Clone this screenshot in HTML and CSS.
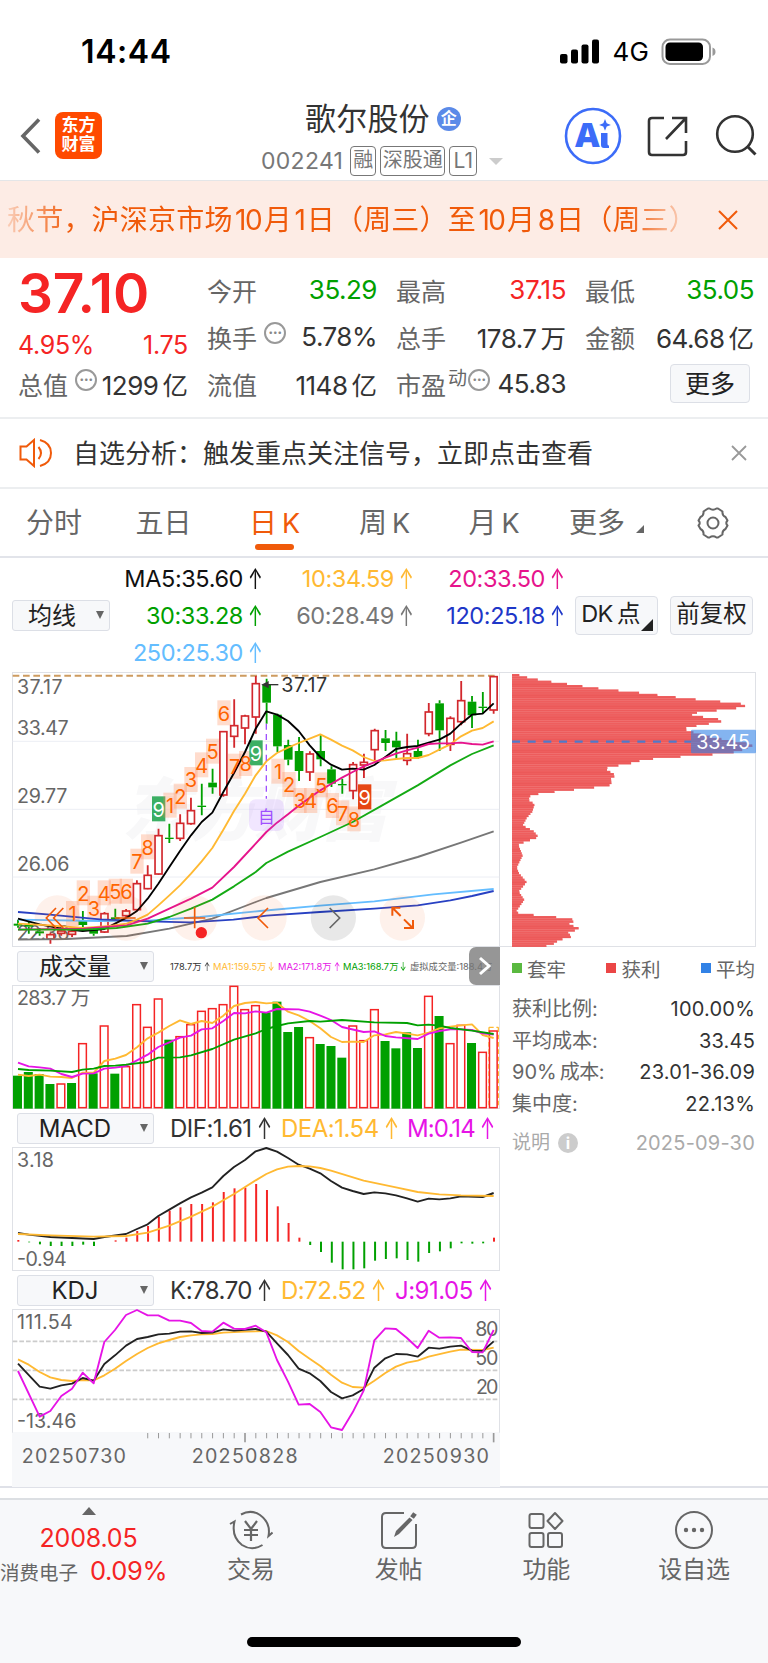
FILE: index.html
```html
<!DOCTYPE html>
<html lang="zh-CN">
<head>
    <meta charset="UTF-8">
    <meta name="viewport" content="width=device-width, initial-scale=1.0">
    <title>歌尔股份 002241</title>
    <link rel="stylesheet" href="styles.css">
</head>
<body>
    <div class="status">
        <span class="time">14:44</span>
        <svg class="signal" width="40" height="25" viewBox="0 0 40 25">
            <rect x="0" y="15" width="7.5" height="9.5" rx="2"/>
            <rect x="11" y="10.5" width="7" height="14" rx="2"/>
            <rect x="21.5" y="5.5" width="7" height="19" rx="2"/>
            <rect x="32" y="0.5" width="7" height="24" rx="2"/>
        </svg>
        <span class="net">4G</span>
        <svg class="battery" width="55" height="28" viewBox="0 0 55 28">
            <rect x="1.5" y="1.5" width="47.5" height="24.5" rx="7.5" fill="#fff" stroke="#999" stroke-width="2"/>
            <rect x="4.5" y="4.5" width="37.5" height="18.5" rx="4.5"/>
            <path d="M51.5 9.5q3 1 3 4.2t-3 4.3z" fill="#999"/>
        </svg>
    </div>

    <div class="nav">
        <svg class="back" width="22" height="38" viewBox="0 0 22 38"><path d="M19 2.5L3 19l16 16.5" fill="none" stroke="#666" stroke-width="3.6"/></svg>
        <div class="logo"><span>东方</span><span>财富</span></div>
        <div class="title">
            <div class="name">歌尔股份<i class="corp">企</i></div>
            <div class="code">002241<b class="t1">融</b><b class="t2">深股通</b><b class="t3">L1</b><i class="down"></i></div>
        </div>
        <div class="ai">
            <svg width="58" height="58" viewBox="0 0 58 58">
                <circle cx="29" cy="29" r="27" fill="none" stroke="#3c6cf8" stroke-width="2.6"/>
                <path d="M41 12l1.700 4.200 4.200 1.700-4.200 1.700L41 23.800l-1.700-4.200-4.200-1.700 4.200-1.700z" fill="#3c6cf8"/>
                <text x="11" y="40" class="aitext">A</text>
                <path d="M37 26h6.500v11q0 1.500 1.500 1.500v2.500h-5q-3 0-3-3z" fill="#3c6cf8"/>
            </svg>
        </div>
        <svg class="share" width="42" height="42" viewBox="0 0 42 42"><path d="M17 3H5Q2 3 2 6v31q0 3 3 3h31q3 0 3-3V26M25 3h14v15M39 3L19 24" fill="none" stroke="#333" stroke-width="2.600"/></svg>
        <svg class="search" width="42" height="44" viewBox="0 0 42 44"><circle cx="20" cy="21" r="17.800" fill="none" stroke="#333" stroke-width="2.600"/><path d="M32 33l8.500 8.500" stroke="#333" stroke-width="3"/></svg>
    </div>

    <div class="banner">
        <div class="marquee">秋节，沪深京市场<em>10</em>月<em>1</em>日（周三）至<em>10</em>月<em>8</em>日（周三）</div>
        <svg width="20" height="20" viewBox="0 0 20 20"><path d="M1 1l18 18M19 1L1 19" stroke="#f05a0a" stroke-width="2"/></svg>
    </div>

    <div class="quote">
        <div class="last">
            <div class="price">37.10</div>
            <div class="change"><span>4.95%</span><span>1.75</span></div>
            <div class="pair"><span class="lbl">总值<i class="dots">···</i></span><span>1299<u>亿</u></span></div>
        </div>
        <div class="grid">
            <div class="pair"><span class="lbl">今开</span><span class="down-c">35.29</span></div>
            <div class="pair"><span class="lbl">最高</span><span class="up-c">37.15</span></div>
            <div class="pair"><span class="lbl">最低</span><span class="down-c">35.05</span></div>
            <div class="pair"><span class="lbl">换手<i class="dots">···</i></span><span>5.78%</span></div>
            <div class="pair"><span class="lbl">总手</span><span>178.7<u>万</u></span></div>
            <div class="pair"><span class="lbl">金额</span><span>64.68<u>亿</u></span></div>
            <div class="pair"><span class="lbl">流值</span><span>1148<u>亿</u></span></div>
            <div class="pair"><span class="lbl">市盈<sup>动</sup><i class="dots pe">···</i></span><span>45.83</span></div>
            <div class="morecell"><button class="more">更多</button></div>
        </div>
    </div>

    <div class="notice">
        <svg width="34" height="30" viewBox="0 0 34 30" fill="none" stroke="#f05a0a" stroke-width="2"><path d="M1.500 8.500h6L15 2v26l-7.500-6.500h-6zM19.500 9q5 6 0 12M21 2q11 3 11 13T21 28"/></svg>
        <span>自选分析：触发重点关注信号，立即点击查看</span>
        <svg class="x" width="16" height="16" viewBox="0 0 16 16"><path d="M1 1l14 14M15 1L1 15" stroke="#999" stroke-width="1.800"/></svg>
    </div>

    <div class="tabs">
        <span>分时</span><span>五日</span><span class="active">日<em>K</em></span><span>周<em>K</em></span><span>月<em>K</em></span><span class="tab-more">更多<i class="corner"></i></span>
        <svg width="32" height="32" viewBox="0 0 32 32" fill="none" stroke="#666" stroke-width="2"><path d="M11 1.500h1.500q3.500 2.500 7 0H21l4.500 3q-.5 4 3 5.500l2 3.500q-2.500 2.500 0 5l-2 3.500q-3.500 1.500-3 5.500l-4.500 3h-1.500q-3.500-2.500-7 0H11l-4.500-3q.5-4-3-5.500l-2-3.500q2.500-2.500 0-5l2-3.500q3.500-1.500 3-5.500z" stroke-linejoin="round"/><circle cx="16" cy="16" r="5.500"/></svg>
    </div>

    <div class="ma">
        <div class="select ma-select">均线<i></i></div>
        <div class="ma-grid">
            <span class="c-black">MA5:35.60<a>↑</a></span><span class="c-yellow">10:34.59<a>↑</a></span><span class="c-pink">20:33.50<a>↑</a></span>
            <span class="c-green">30:33.28<a>↑</a></span><span class="c-gray">60:28.49<a>↑</a></span><span class="c-blue">120:25.18<a>↑</a></span>
            <span class="c-sky">250:25.30<a>↑</a></span>
        </div>
        <div class="ma-btn dk">DK<u>点</u><i class="corner"></i></div>
        <div class="ma-btn">前复权</div>
    </div>

    <div class="charts">
        <div class="left">
            <svg id="kline" width="489" height="275" viewBox="36 35 1467 825"></svg>
            <div class="head vol">
                <div class="select">成交量<i></i></div>
                <span class="v1">178.7万<a>↑</a></span><span class="v2 c-yellow">MA1:159.5万<a>↓</a></span><span class="v3 c-purple">MA2:171.8万<a>↑</a></span><span class="v4 c-green">MA3:168.7万<a>↓</a></span><span class="v5">虚拟成交量:188.4万</span>
                <div class="next"><svg width="14" height="20" viewBox="0 0 14 20"><path d="M2 2l9 8-9 8" fill="none" stroke="#fff" stroke-width="3"/></svg></div>
            </div>
            <svg id="volume" width="489" height="124" viewBox="36 135 1467 372"></svg>
            <div class="head">
                <div class="select">MACD<i></i></div>
                <span class="h1">DIF:1.61<a>↑</a></span><span class="h2 c-yellow">DEA:1.54<a>↑</a></span><span class="h3 c-purple">M:0.14<a>↑</a></span>
            </div>
            <svg id="macd" width="489" height="124" viewBox="36 21 1467 372"></svg>
            <div class="head">
                <div class="select">KDJ<i></i></div>
                <span class="k1">K:78.70<a>↑</a></span><span class="k2 c-yellow">D:72.52<a>↑</a></span><span class="k3 c-purple">J:91.05<a>↑</a></span>
            </div>
            <svg id="kdj" width="489" height="178" viewBox="36 27 1467 534"></svg>
        </div>
        <div class="right">
            <svg id="chips" width="256" height="275" viewBox="0 305 768 825"></svg>
            <div class="legend"><span class="l-g">套牢</span><span class="l-r">获利</span><span class="l-b">平均</span></div>
            <div class="row"><span>获利比例:</span><b>100.00%</b></div>
            <div class="row"><span>平均成本:</span><b>33.45</b></div>
            <div class="row"><span>90%<u>成本:</u></span><b>23.01-36.09</b></div>
            <div class="row"><span>集中度:</span><b>22.13%</b></div>
            <div class="row note"><span>说明<i>i</i></span><b>2025-09-30</b></div>
        </div>
    </div>

    <div class="tabbar">
        <div class="index">
            <i class="up"></i>
            <div class="value">2008.05</div>
            <div class="sector">消费电子<span>0.09%</span></div>
        </div>
        <div class="item">
            <svg width="44" height="40" viewBox="0 0 44 40" fill="none" stroke="#666" stroke-width="2"><path d="M12 4.500Q22-1 31 5q11 8 8.500 21l4-3.500M33.500 35Q23 41.500 13 35 2 26.500 5.500 11.500L1 14"/><path d="M16 11l6 8 6-8M22 19v12M15 20h14M15 25h14" stroke-width="2.200"/></svg>
            交易
        </div>
        <div class="item">
            <svg width="44" height="40" viewBox="0 0 44 40" fill="none" stroke="#666" stroke-width="2"><path d="M27 3H9Q5 3 5 7v27q0 4 4 4h26q4 0 4-4V14"/><path d="M17 27l2-6L32.500 7.500l3 2.500L22 24z" fill="#666" stroke="none"/><path d="M35 7.500l3-4" stroke-width="4.500"/></svg>
            发帖
        </div>
        <div class="item">
            <svg width="44" height="40" viewBox="0 0 44 40" fill="none" stroke="#666" stroke-width="2"><rect x="5.500" y="4" width="14" height="14" rx="2"/><rect x="5.500" y="23" width="14" height="14" rx="2"/><rect x="24" y="23" width="14" height="14" rx="2"/><path d="M31 3l7.500 8-7.500 8-7.500-8z" stroke-linejoin="round"/></svg>
            功能
        </div>
        <div class="item">
            <svg width="44" height="40" viewBox="0 0 44 40" fill="none" stroke="#666" stroke-width="2"><circle cx="22" cy="20" r="18"/><g fill="#666" stroke="none"><circle cx="14" cy="20" r="2.200"/><circle cx="22" cy="20" r="2.200"/><circle cx="30" cy="20" r="2.200"/></g></svg>
            设自选
        </div>
        <div class="home"></div>
    </div>
    <script src="script.js"></script>
</body>
</html>
```
FILE: styles.css
```css
* {
    box-sizing: border-box;
}
body {
    margin: 0;
    width: 768px;
    height: 1663px;
    overflow: hidden;
    background: #fff;
    color: #333;
    font-family: Inter, "Noto Sans CJK SC", sans-serif;
    font-size: 26px;
}
i, em {
    font-style: normal;
}
u, a {
    text-decoration: none;
}
svg {
    display: block;
    flex: none;
}
span, div, button {
    white-space: nowrap;
}

/* status bar */
.status {
    display: flex;
    align-items: center;
    height: 103px;
    padding: 0 52px 0 81px;
    color: #000;
}
.time {
    flex: 1;
    font-size: 32px;
    font-weight: 600;
    letter-spacing: 0.6px;
}
.net {
    margin: 0 12px 0 12px;
    font-size: 26px;
    letter-spacing: 0.2px;
}

/* title bar */
.nav {
    display: flex;
    height: 78px;
    border-bottom: 1px solid #e4e6e8;
    padding-left: 20px;
}
.back {
    margin-top: 14px;
}
.logo {
    display: flex;
    flex-direction: column;
    width: 47px;
    height: 47px;
    margin: 9px 0 0 13px;
    padding-top: 4px;
    border-radius: 8px;
    background: #ff4a00;
    color: #fff;
    font-size: 17px;
    font-weight: 700;
    line-height: 19px;
    text-align: center;
}
.title {
    width: 340px;
    margin-left: 110px;
}
.name {
    display: flex;
    align-items: center;
    height: 32px;
    padding-left: 93px;
    font-size: 31px;
    line-height: 32px;
    letter-spacing: 0.2px;
}
.corp {
    width: 24px;
    height: 24px;
    margin-left: 7px;
    border-radius: 12px;
    background: #5b8ae8;
    color: #fff;
    font-size: 16px;
    font-weight: 700;
    line-height: 23px;
    text-align: center;
}
.code {
    display: flex;
    align-items: center;
    height: 30px;
    margin-top: 11px;
    padding-left: 49px;
    color: #777;
    font-size: 23px;
    letter-spacing: 0.3px;
}
.code b {
    height: 30px;
    margin-left: 4px;
    border: 1.5px solid #777;
    border-radius: 4px;
    font-size: 20px;
    font-weight: 400;
    line-height: 27px;
    text-align: center;
    letter-spacing: 0;
}
.code .t1 {
    width: 26px;
    margin-left: 7px;
}
.code .t2 {
    width: 65px;
}
.code .t3 {
    width: 28px;
    font-size: 21px;
}
.down {
    margin-left: 12px;
    border: 7px solid transparent;
    border-top-color: #ccc;
    border-bottom: 0;
}
.ai {
    margin: 4px 0 0 12px;
}
.aitext {
    font: 900 34px "Noto Sans", Inter, sans-serif;
    fill: #3c6cf8;
}
.share {
    margin: 12px 0 0 25px;
}
.search {
    margin: 10px 0 0 26px;
}

/* holiday notice */
.banner {
    display: flex;
    align-items: center;
    justify-content: space-between;
    height: 77px;
    padding: 0 30px 0 7px;
    background: #fdece5;
    color: #f05a0a;
}
.marquee {
    width: 695px;
    padding-bottom: 3px;
    font-size: 28px;
    letter-spacing: 0.2px;
    -webkit-mask-image: linear-gradient(90deg, rgba(0, 0, 0, 0.2), #000 65px, #000 620px, rgba(0, 0, 0, 0.2) 675px);
    mask-image: linear-gradient(90deg, rgba(0, 0, 0, 0.2), #000 65px, #000 620px, rgba(0, 0, 0, 0.2) 675px);
}
.marquee em {
    margin: 0 2.5px;
    letter-spacing: -1.5px;
}

/* quote */
.quote {
    display: flex;
    height: 161px;
    padding: 10px 13px 0 18px;
    border-bottom: 2px solid #eceef0;
}
.last {
    width: 170px;
    margin-right: 19px;
    color: #f52424;
}
.price {
    height: 50px;
    font-size: 55px;
    font-weight: 600;
    line-height: 51px;
    letter-spacing: -0.2px;
}
.change {
    display: flex;
    justify-content: space-between;
    height: 44px;
    line-height: 54px;
    font-size: 25px;
    letter-spacing: -0.3px;
}
.pair {
    display: flex;
    justify-content: space-between;
    align-items: center;
    height: 46px;
    padding-bottom: 3px;
    color: #333;
    letter-spacing: -0.5px;
}
.pair u {
    margin-left: 4px;
    font-size: 25.5px;
    letter-spacing: 0;
}
.lbl {
    display: flex;
    color: #666;
    font-size: 25px;
    letter-spacing: 0;
}
.dots {
    width: 22px;
    height: 22px;
    margin: 3px 0 0 7px;
    border: 2px solid #999;
    border-radius: 11px;
    color: #888;
    font-size: 15px;
    font-weight: 700;
    line-height: 18px;
    text-align: center;
    letter-spacing: -0.5px;
}
.lbl sup {
    margin: -1px 0 0 2px;
    font-size: 19px;
    line-height: 28px;
}
.dots.pe {
    margin-left: 1px;
}
.grid {
    flex: 1;
    display: grid;
    grid-template-columns: 170px 170px 169px;
    grid-auto-rows: 47px;
    column-gap: 19px;
}
.down-c {
    color: #00a000;
}
.up-c {
    color: #f52424;
}
.morecell {
    padding: 2px 0 0 85px;
}
.more {
    width: 80px;
    height: 39px;
    padding: 0;
    border: 1px solid #dcdfe6;
    border-radius: 4px;
    background: #f7f8fa;
    color: #222;
    font: 25px/34px Inter, "Noto Sans CJK SC", sans-serif;
}

/* signal line */
.notice {
    display: flex;
    align-items: center;
    height: 70px;
    padding: 0 21px 0 19px;
    border-bottom: 2px solid #eceef0;
    font-size: 26px;
}
.notice span {
    flex: 1;
    margin-left: 20px;
    padding-bottom: 4px;
}

/* period tabs */
.tabs {
    display: grid;
    grid-template-columns: 108px 111px 111px 109px 110px 129px 32px;
    align-items: center;
    height: 69px;
    border-bottom: 2px solid #e2e4ea;
    color: #666;
    font-size: 28px;
}
.tabs span {
    position: relative;
    padding-bottom: 4px;
    text-align: center;
}
.tabs em {
    margin-left: 5px;
    font-size: 27px;
}
.tabs svg {
    margin-left: 19px;
}
.tabs .active {
    color: #f05a0a;
}
.active::after {
    content: "";
    position: absolute;
    left: 36px;
    bottom: -5px;
    width: 39px;
    height: 6px;
    border-radius: 3px;
    background: #f05a0a;
}
.tabs .tab-more {
    padding-left: 20px;
    text-align: left;
}
.tabs .corner {
    display: inline-block;
    margin-left: 11px;
    border-left: 8px solid transparent;
    border-bottom: 8px solid #666;
}

/* moving averages */
.ma {
    display: flex;
    align-items: center;
    height: 114px;
    padding-left: 12px;
}
.select {
    display: flex;
    align-items: center;
    justify-content: center;
    position: relative;
    width: 137px;
    height: 31px;
    padding-right: 21px;
    border: 1px solid #dcdfe6;
    border-radius: 3px;
    background: #f7f8fa;
    color: #222;
    font-size: 24px;
    line-height: 29px;
}
.select i {
    position: absolute;
    right: 5px;
    top: 10px;
    border: 4.5px solid transparent;
    border-top: 8px solid #666;
    border-bottom: 0;
}
.ma-select {
    width: 98px;
    padding-right: 18px;
}
.ma-grid {
    display: grid;
    grid-template-columns: 150px 151px 151px;
    grid-auto-rows: 37px;
    height: 111px;
    line-height: 37px;
    font-size: 23.5px;
    text-align: right;
}
.ma-grid a, .head a {
    display: inline-block;
    width: 12px;
    margin-left: 5px;
    text-align: left;
    transform: scale(0.75, 1.22);
    transform-origin: 0 50%;
}
.ma-grid span {
    letter-spacing: -0.4px;
}
.ma-btn {
    position: relative;
    width: 83px;
    height: 39px;
    margin-left: 12px;
    border: 1px solid #dcdfe6;
    border-radius: 4px;
    background: #f7f8fa;
    color: #222;
    font-size: 23.5px;
    line-height: 34px;
    text-align: center;
}
.dk {
    margin-left: 13px;
    padding-right: 12px;
    letter-spacing: -0.5px;
}
.dk u {
    margin-left: 4px;
}
.dk .corner {
    position: absolute;
    right: 4px;
    bottom: 3px;
    border-left: 12px solid transparent;
    border-bottom: 12px solid #222;
}
.c-black { color: #111; }
.c-yellow { color: #ffb932; }
.c-pink { color: #e6148c; }
.c-green { color: #00a000; }
.c-gray { color: #777; }
.c-blue { color: #1e37c8; }
.c-sky { color: #64bdff; }
.c-purple { color: #e614e6; }

/* charts */
.charts {
    display: flex;
    height: 816px;
    border-bottom: 2px solid #dfe1e8;
}
.left {
    width: 488px;
    margin-left: 12px;
}
.head {
    display: flex;
    align-items: center;
    position: relative;
    width: 489px;
    height: 38px;
    padding-left: 5px;
    font-size: 24px;
    letter-spacing: -0.5px;
}
.head .select {
    margin-right: 16px;
    flex: none;
    letter-spacing: 0;
}
.h1, .k1 { width: 111px; }
.h2 { width: 126px; }
.k2 { width: 114px; }
.head .h3 { letter-spacing: -0.9px; }
.vol {
    font-size: 9.3px;
    letter-spacing: 0;
}
.vol a {
    width: 7px;
    margin-left: 2px;
    font-size: 10px;
}
.v1 { width: 43px; }
.v2, .v3 { width: 65px; }
.v4 { width: 67px; }
.v5 { color: #666; }
.next {
    display: flex;
    align-items: center;
    justify-content: center;
    position: absolute;
    right: 1px;
    top: 0;
    width: 31px;
    height: 38px;
    border-radius: 7px 0 0 7px;
    background: rgba(120, 120, 120, 0.78);
}
.axis {
    fill: #666;
}
.chart-line {
    fill: none;
    stroke-width: 5.6;
    stroke-linejoin: round;
}
.watermark {
    font: italic 900 205px "Noto Sans CJK SC", sans-serif;
    fill: #f8f8f9;
}

/* chip distribution */
.right {
    width: 256px;
    font-size: 20px;
}
.legend {
    display: flex;
    justify-content: space-between;
    height: 42px;
    margin: 0 1px 2px 12px;
    align-items: center;
    color: #666;
    font-size: 19.5px;
}
.legend span {
    display: flex;
    align-items: center;
    gap: 5px;
}
.legend span::before {
    content: "";
    width: 10px;
    height: 10px;
    background: #5ab940;
}
.legend .l-r::before { background: #eb4646; }
.legend .l-b::before { background: #3282e6; }
.row {
    display: flex;
    justify-content: space-between;
    height: 31.5px;
    margin: 0 1px 0 12px;
    line-height: 36px;
    color: #666;
}
.row b {
    color: #333;
    font-weight: 400;
    letter-spacing: 0.2px;
}
.row u {
    margin-left: 3px;
    letter-spacing: -0.5px;
}
.row.note {
    margin-top: 8px;
}
.note, .note b {
    color: #aaa;
}
.note span {
    display: flex;
    align-items: center;
    height: 36px;
    font-size: 19px;
}
.note i {
    width: 20px;
    height: 20px;
    margin-left: 8px;
    border-radius: 10px;
    background: #ccc;
    color: #fff;
    font-size: 16px;
    font-weight: 700;
    line-height: 20px;
    text-align: center;
}

/* bottom bar */
.tabbar {
    display: grid;
    grid-template-columns: 177px repeat(4, 147.75px);
    grid-template-rows: 127px 1fr;
    height: 166px;
    margin-top: 10px;
    border-top: 2px solid #dcdfe3;
    background: #f7f8fa;
    color: #666;
}
.index {
    padding-top: 7px;
}
.up {
    display: block;
    width: 0;
    margin-left: 82px;
    border: 7px solid transparent;
    border-bottom: 8px solid #666;
    border-top: 0;
}
.value {
    height: 34px;
    margin-top: 6px;
    color: #f52424;
    font-size: 25px;
    line-height: 34px;
    text-align: center;
    letter-spacing: -0.2px;
}
.sector {
    display: flex;
    align-items: baseline;
    font-size: 19.5px;
}
.sector span {
    margin-left: 12px;
    color: #f52424;
    font-size: 25.5px;
    letter-spacing: -0.4px;
}
.item {
    display: flex;
    flex-direction: column;
    align-items: center;
    padding-top: 10px;
    font-size: 24px;
    line-height: 39px;
}
.home {
    grid-column: 1 / -1;
    width: 274px;
    height: 10px;
    margin: 10px 0 0 247px;
    border-radius: 5px;
    background: #000;
}
```
FILE: script.js
```js
const RED = '#d2282d', GREEN = '#00a000';
const STEP = 32.43;
const px = i => 54 + STEP * i;

function line(points, color) {
    return `<polyline class="chart-line" points="${points}" stroke="${color}"/>`;
}
function label(x, y, w, text, extra = '') {
    return `<text class="axis" font-size="59" x="${x}" y="${y}" textLength="${w}" ${extra}>${text}</text>`;
}
function frame(y, h) {
    return `<rect x="37.500" y="${y}" width="1461" height="${h}" fill="none" stroke="#dfe1e6" stroke-width="3"/>`;
}
function hline(y, color, dash = '') {
    return `<path d="M38 ${y}H1498" stroke="${color}" stroke-width="3" stroke-dasharray="${dash}"/>`;
}

// [up, body top, body bottom, high, low]
const candles = [
    [0,790,796,778,802],[0,792,799,782,820],[0,813,819,803,826],[1,823,836,818,850],[1,812,819,808,826],[1,813,822,806,830],
    [0,781,794,752,800],[0,808,820,800,826],[1,760,815,755,818],[0,771,777,745,782],[1,752,766,746,770],[1,670,748,660,752],
    [1,645,685,615,687],[1,526,641,505,643],[0,532,536,490,548],[1,489,534,462,542],[1,451,490,412,493],[0,436,440,370,465],
    [0,367,381,325,400],[1,214,404,212,409],[1,196,228,117,262],[1,167,203,163,252],[1,70,170,47,220],[0,72,127,55,190],
    [0,163,258,160,275],[0,254,298,238,315],[0,272,332,230,362],[1,281,335,273,362],[0,272,297,225,318],[0,327,370,318,380],
    [0,371,375,355,400],[1,313,391,305,417],[1,306,314,280,353],[1,211,268,205,305],[0,234,248,209,272],[0,241,261,214,295],
    [1,280,300,220,315],[0,272,292,238,295],[1,155,220,128,228],[0,129,210,120,272],[1,174,252,168,272],[1,121,184,62,195],
    [0,124,165,107,203],[0,139,143,95,158],[1,49,149,47,160]
];

// sequence numbers: text, centre x, top y
const marks = [
    [1,218,722],[2,250,660],[3,282,706],[4,313,660],[5,346,655],[6,379,655],[7,411,565],[8,443,522],[9,476,408,'#3caf64'],
    [1,510,397],[2,541,370],[3,573,320],[4,605,276],[5,638,235],[6,672,120],[7,704,280],[8,737,272],[9,768,240,'#3caf64'],
    [1,834,295],[2,867,335],[3,900,383],[4,932,383],[5,964,336],[6,997,398],[7,1028,420],[8,1062,438],[9,1094,372,'#e64614']
];

function drawKline() {
    let s = `<text class="watermark" x="365" y="525" textLength="800">东方财富</text>` + frame(36.5, 822);
    s += hline(243, '#eceef4') + hline(447, '#eceef4') + hline(650, '#eceef4');
    s += `<path d="M38 46H1490" stroke="#cd9b5f" stroke-width="6" stroke-dasharray="20 11"/>`;
    s += label(51, 101, 137, '37.17') + label(51, 225, 155, '33.47') + label(51, 429, 151, '29.77') + label(51, 633, 157, '26.06') + label(51, 839, 157, '22.36');
    for (const [n, x, y, bg] of marks) {
        s += `<rect x="${x - 20}" y="${y}" width="40" height="75" fill="${bg || 'rgba(255,130,75,.28)'}"/>`;
    }
    candles.forEach(([up, a, b, hi, lo], i) => {
        const x = px(i), c = up ? RED : GREEN;
        s += `<path d="M${x} ${hi}V${a}M${x} ${b}V${lo}" stroke="${c}" stroke-width="5.500"/>`;
        s += up ? `<rect x="${x - 10.5}" y="${a}" width="21" height="${b - a}" fill="#fff" stroke="${c}" stroke-width="5"/>`
                : `<rect x="${x - 13}" y="${a}" width="26" height="${b - a}" fill="${c}"/>`;
    });
    s += line('54,838 200,836 380,827 508,805 637,775 767,725 799,713 961,665 1123,627 1253,590 1383,547 1481,513', '#777');
    s += line('54,778 300,782 443,781 600,770 780,752 960,736 1123,723 1300,702 1481,686', '#64bdff');
    s += line('54,755 150,763 300,777 443,783 570,786 700,778 800,766 960,755 1123,745 1253,735 1351,720 1416,707 1481,692', '#2841c3');
    s += line('54,775 119,792 184,805 248,812 313,806 345,790 380,772 411,752 443,715 475,670 508,620 540,572 573,525 605,485 637,457 670,395 702,338 735,275 767,205 799,153 831,163 864,182 896,212 929,255 961,290 993,313 1026,328 1058,325 1091,328 1123,314 1156,290 1188,266 1221,260 1253,257 1286,247 1318,238 1351,220 1383,190 1416,163 1448,160 1481,129', '#000');
    s += line('54,790 150,795 250,803 330,797 380,790 411,778 443,763 475,735 508,705 540,675 573,640 605,603 637,563 670,508 702,452 735,400 767,345 799,303 831,278 864,262 896,248 929,235 961,222 993,238 1026,256 1058,270 1091,290 1123,302 1156,300 1188,296 1221,293 1253,293 1286,284 1318,268 1351,252 1383,228 1416,211 1448,203 1481,183', '#ffb932');
    s += line('54,808 250,805 380,795 443,775 508,745 573,715 637,682 702,620 767,550 799,515 831,487 864,462 896,436 929,412 961,390 993,371 1026,352 1058,335 1091,318 1123,306 1156,292 1188,280 1221,270 1253,262 1286,251 1318,249 1351,249 1383,247 1416,251 1448,253 1481,243', '#e6148c');
    s += line('54,808 250,808 350,803 443,790 508,770 573,745 637,718 702,678 767,635 799,608 864,574 961,530 1058,485 1156,430 1253,375 1351,315 1416,281 1481,255', '#14aa14');
    for (const [n, x, y, bg] of marks) {
        s += `<text x="${x}" y="${y + 61}" font-size="60" text-anchor="middle" fill="${bg ? '#fff' : '#ff6400'}">${n}</text>`;
    }
    s += `<path d="M799 190V415" stroke="#a050ff" stroke-width="4" stroke-dasharray="18 13"/>`;
    s += `<rect x="747" y="417" width="105" height="95" rx="20" fill="rgba(170,100,255,.16)"/><text x="799" y="487" font-size="50" text-anchor="middle" fill="#a050ff">自</text>`;
    s += `<path d="M790 73H835" stroke="#333" stroke-width="4"/><path d="M784 73l22-11v22z" fill="#333"/>`;
    s += label(844, 94, 137, '37.17', 'style="fill:#333"');
    for (const x of [172, 378, 584, 792, 1207]) {
        s += `<circle cx="${x}" cy="773" r="68" fill="rgba(245,100,30,.09)"/>`;
    }
    s += `<circle cx="1000" cy="773" r="68" fill="rgba(0,0,0,.09)"/>`;
    s += `<g fill="none" stroke="#f05a0a" stroke-width="5"><path d="M168 743l-29 30 29 30M190 743l-29 30 29 30M345 773h62M552 773h64M584 741v63M804 743l-30 30 30 30"/>`;
    s += `<path stroke-width="6" d="M1177 766v-24h24M1178 743l24 24M1239 779v24h-27M1238 803l-26-26"/></g>`;
    s += `<path d="M989 743l30 30-30 30" fill="none" stroke="#666" stroke-width="5"/><circle cx="604" cy="817" r="17" fill="#f52424"/>`;
    document.getElementById('kline').innerHTML = s;
}

const volumes = [
    407,396,402,432,-430,429,-309,400,-256,401,-378,-192,-260,-175,299,-288,-252,-212,-204,-192,-137,-207,-195,217,185,276,261,
    -291,312,318,353,-256,-300,-207,303,325,277,324,-167,228,-309,-254,309,-335,-271
];

// negative values are rising days
function drawVolume() {
    let s = frame(136.5, 369);
    s += `<path d="M1467 262h28M1467 262V503M1495 262V503" fill="none" stroke="#ffb932" stroke-width="4" stroke-dasharray="14 8"/>`;
    volumes.forEach((v, i) => {
        const x = px(i) - 1, y = Math.abs(v);
        s += v < 0 ? `<rect x="${x - 11.5}" y="${y + 2}" width="23" height="${501 - y}" fill="#fff" stroke="#f52424" stroke-width="4.500"/>`
                   : `<rect x="${x - 14}" y="${y}" width="27" height="${506 - y}" fill="${GREEN}"/>`;
    });
    s += line('54,404 86,408 119,404 151,410 184,411 216,414 248,398 281,398 313,363 346,356 378,345 411,322 443,295 475,278 508,258 540,241 573,252 605,243 637,249 670,227 702,198 735,189 767,186 799,190 831,188 864,215 896,226 929,243 961,265 993,291 1026,306 1058,305 1091,306 1123,286 1156,283 1188,276 1221,281 1253,286 1286,278 1318,265 1351,260 1383,256 1416,253 1448,285 1481,294', '#ffb932');
    s += line('54,368 86,379 119,382 151,386 184,402 216,411 248,401 281,400 313,386 346,383 378,378 411,361 443,344 475,321 508,307 540,293 573,287 605,268 637,265 670,243 702,219 735,220 767,214 799,218 831,207 896,208 929,215 961,227 993,240 1026,261 1091,276 1123,274 1156,288 1188,292 1253,297 1286,281 1318,273 1351,268 1383,268 1416,270 1448,280 1481,284', '#e614e6');
    s += line('54,387 86,390 151,392 216,396 248,389 281,386 313,378 346,377 378,374 443,366 475,353 540,352 573,346 637,327 702,299 767,280 799,267 831,258 864,250 929,243 961,245 1026,240 1123,247 1221,249 1253,256 1286,254 1318,257 1351,264 1416,272 1481,282', GREEN);
    s += label(51, 195, 220, '283.7 万');
    document.getElementById('volume').innerHTML = s;
}

const hist = [
    300,307,313,318,318,318,314,318,305,301,293,273,258,230,212,202,192,192,187,156,145,143,132,150,199,249,293,315,336,368,388,388,
    385,362,357,355,360,365,339,334,325,310,311,310,293
];

function drawMacd() {
    let s = frame(22.5, 369);
    hist.forEach((y, i) => {
        s += `<path d="M${px(i) + 1} 305V${y}" stroke="${y < 305 ? '#f52424' : GREEN}" stroke-width="6"/>`;
    });
    s += line('54,279 86,284 151,291 216,294 281,297 313,291 378,282 411,267 443,253 475,228 508,209 540,190 573,172 605,158 637,142 670,108 702,81 735,60 767,34 799,24 831,35 864,54 896,74 929,86 961,100 993,123 1026,143 1058,153 1091,162 1123,157 1156,160 1188,166 1221,175 1253,185 1286,176 1318,178 1351,175 1383,169 1448,171 1481,159', '#222');
    s += line('54,282 151,286 281,290 378,288 443,278 508,257 573,230 637,200 702,162 767,121 799,102 831,88 864,80 896,78 929,79 961,84 993,92 1091,122 1188,142 1253,156 1318,163 1383,166 1481,168', '#ffb932');
    s += label(51, 80, 111, '3.18') + label(51, 378, 149, '-0.94');
    document.getElementById('macd').innerHTML = s;
}

function drawKdj() {
    let s = `<rect x="36" y="398" width="1464" height="163" fill="#f7f8fa"/>` + frame(28.5, 369);
    s += `<path d="M38 398H1498" stroke="#f7f8fa" stroke-width="4"/>`;
    for (const y of [124, 211, 298]) {
        s += `<path d="M38 ${y}H1498" stroke="#ccc" stroke-width="5" stroke-dasharray="14 6"/>`;
    }
    s += label(51, 87, 167, '111.54') + label(51, 384, 178, '-13.46');
    s += label(1426, 109, 69, '80') + label(1426, 196, 69, '50') + label(1428, 283, 67, '20');
    s += line('54,178 86,194 119,216 151,232 184,240 216,243 248,240 281,241 313,226 345,206 378,183 411,162 443,144 475,130 508,120 540,111 573,106 605,103 637,102 670,98 735,95 799,93 831,106 864,126 896,153 929,176 961,198 993,224 1026,248 1058,261 1091,263 1123,242 1156,219 1188,200 1221,188 1253,182 1286,170 1351,155 1383,149 1448,150 1481,143', '#ffb932');
    s += line('54,191 119,260 151,266 184,256 216,251 248,234 281,242 313,192 345,166 378,137 411,117 443,111 475,103 508,101 540,95 573,94 605,99 637,98 670,88 702,92 767,87 799,95 831,130 864,165 896,206 929,220 961,243 993,276 1026,295 1058,286 1091,267 1123,203 1156,175 1188,162 1221,163 1253,170 1286,143 1318,146 1351,140 1383,137 1416,152 1448,153 1481,124', '#222');
    s += line('54,213 119,350 151,333 184,288 216,266 248,218 281,250 313,126 345,90 378,45 411,30 443,46 475,46 508,62 540,62 573,69 605,93 637,95 670,68 702,86 735,87 767,77 799,97 831,180 864,245 896,314 929,312 961,336 993,382 1026,390 1058,337 1091,272 1123,121 1156,85 1188,87 1221,114 1253,144 1286,92 1318,113 1351,112 1383,114 1416,156 1448,157 1481,90', '#e614e6');
    for (let i = 12; i < 45; i++) {
        const major = i === 21 || i === 44;
        s += `<path d="M${px(i)} 399V${major ? 427 : 415}" stroke="#999" stroke-width="${major ? 5 : 3}"/>`;
    }
    s += label(65, 490, 313, '20250730') + label(575, 490, 318, '20250828') + label(1148, 490, 319, '20250930');
    document.getElementById('kdj').innerHTML = s;
}

// y, right edge
const chips = [
    [311,58],[320,90],[327,129],[334,175],[340,221],[347,267],[353,314],[360,383],[367,446],[374,500],[380,554],[387,618],[393,698],
    [400,743],[407,727],[413,690],[420,612],[427,566],[434,592],[440,635],[447,680],[453,642],[460,608],[466,568],[473,549],[480,573],
    [486,590],[500,650],[519,764],[530,740],[540,715],[546,673],[553,577],[559,480],[566,428],[573,400],[579,380],[585,323],[595,321],
    [612,348],[620,333],[640,335],[646,297],[653,233],[659,178],[666,122],[672,92],[685,85],[698,104],[720,97],[740,80],[762,68],
    [772,88],[780,102],[793,113],[800,108],[806,90],[812,72],[820,55],[852,68],[888,50],[905,57],[932,80],[960,56],[985,73],[1020,48],
    [1027,60],[1032,120],[1039,188],[1046,232],[1053,212],[1060,205],[1066,232],[1073,239],[1079,215],[1086,198],[1093,220],[1099,207],
    [1106,173],[1112,170],[1119,156],[1126,125]
];

function drawChips() {
    let s = '<path d="M0 306.500H768M766.500 306V1129M0 1128.500H768" fill="none" stroke="#dfe1e6" stroke-width="3"/>';
    let k = 0;
    for (let y = 311; y < 1124; y += 6.6) {
        while (k < chips.length - 2 && chips[k + 1][0] < y) k++;
        const [y0, x0] = chips[k], [y1, x1] = chips[k + 1];
        const x = x0 + (x1 - x0) * Math.min(1, (y - y0) / (y1 - y0));
        s += `<rect x="36" y="${y}" width="${x - 36}" height="6.600" fill="#ee5e5e"/><rect x="36" y="${y + 5}" width="${x - 36}" height="2" fill="#e95656"/>`;
    }
    s += '<path d="M36 514H573" stroke="#5078c8" stroke-width="7" stroke-dasharray="24 23"/>';
    s += '<rect x="573" y="478" width="195" height="71" rx="4" fill="rgba(50,130,230,.6)"/>';
    s += '<text x="589" y="537" font-size="59" textLength="161" fill="#fff">33.45</text>';
    document.getElementById('chips').innerHTML = s;
}

drawKline();
drawVolume();
drawMacd();
drawKdj();
drawChips();
```
